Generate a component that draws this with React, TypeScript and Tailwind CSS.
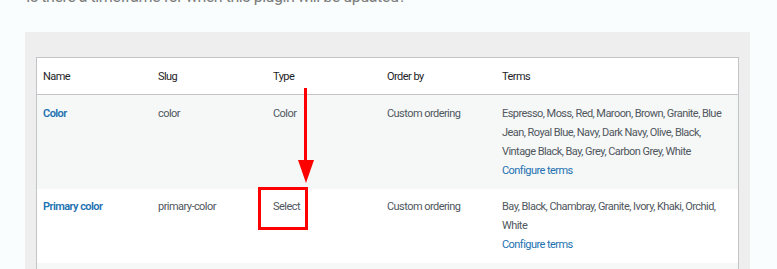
import React from "react";

type Row = {
  name: string;
  slug: string;
  type: string;
  order: string;
  terms: string[];
  striped: boolean;
};

const rows: Row[] = [
  {
    name: "Color",
    slug: "color",
    type: "Color",
    order: "Custom ordering",
    terms: [
      "Espresso, Moss, Red, Maroon, Brown, Granite, Blue",
      "Jean, Royal Blue, Navy, Dark Navy, Olive, Black,",
      "Vintage Black, Bay, Grey, Carbon Grey, White",
    ],
    striped: true,
  },
  {
    name: "Primary color",
    slug: "primary-color",
    type: "Select",
    order: "Custom ordering",
    terms: ["Bay, Black, Chambray, Granite, Ivory, Khaki, Orchid,", "White"],
    striped: false,
  },
];

const cols = "grid grid-cols-[115px_115px_114px_115px_1fr]";
const font = {
  fontFamily: 'Roboto, "Liberation Sans", sans-serif',
};

export default function App() {
  return (
    <div
      className="relative w-[777px] h-[269px] overflow-hidden bg-[#fafdfd]"
      style={font}
    >
      <p className="mt-[-15px] ml-[26px] text-[16px] leading-[24px] tracking-[-0.45px] text-[#7c7c7c] whitespace-nowrap">
        Is there a timeframe for when this plugin will be updated?
      </p>

      <div className="mt-[23px] ml-[25px] w-[725px] h-[300px] bg-[#eeeeee] pt-[25px] px-[11px]">
        <div className="border border-[#c3c4c7] bg-white text-[11px] leading-[19px] tracking-[-0.55px] whitespace-nowrap">
          {/* header */}
          <div className={`${cols} border-b border-[#c3c4c7] text-[#1d2327]`}>
            {["Name", "Slug", "Type", "Order by", "Terms"].map((h) => (
              <div key={h} className="pl-[6px] pt-[9px] pb-[8px]">
                {h}
              </div>
            ))}
          </div>

          {rows.map((r) => (
            <div
              key={r.slug}
              className={`${cols} text-[#50575e] ${r.striped ? "bg-[#f6f7f7]" : "bg-white"} ${
                r.striped ? "pt-[9px] pb-[9px]" : "pt-[8px] pb-[9px]"
              }`}
            >
              <div className="pl-[6px] font-semibold text-[#2271b1]">{r.name}</div>
              <div className="pl-[6px]">{r.slug}</div>
              <div className="pl-[6px]">{r.type}</div>
              <div className="pl-[6px]">{r.order}</div>
              <div className="pl-[6px]">
                {r.terms.map((t) => (
                  <div key={t}>{t}</div>
                ))}
                <div className="text-[#2271b1]">Configure terms</div>
              </div>
            </div>
          ))}
          <div className="h-[30px] bg-[#f6f7f7]" />
        </div>
      </div>

      {/* annotation arrow pointing at the Type cell */}
      <svg
        className="absolute left-0 top-0 pointer-events-none"
        width="777"
        height="269"
        viewBox="0 0 777 269"
      >
        <rect x="304" y="88" width="3" height="74" fill="#ff0000" />
        <polygon points="298,160 314,160 306,183" fill="#ff0000" />
      </svg>
      <div className="absolute left-[258px] top-[187px] w-[50px] h-[43px] border-[3px] border-[#ff0000]" />
    </div>
  );
}
